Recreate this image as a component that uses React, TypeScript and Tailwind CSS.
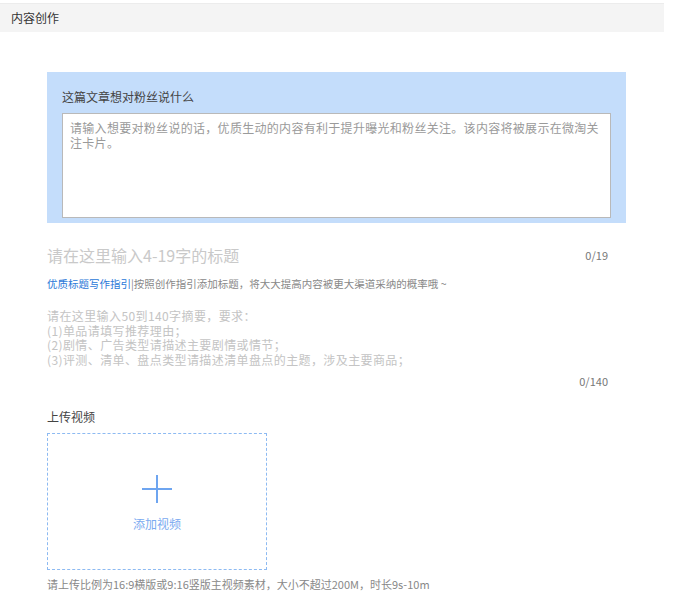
import React from "react";

const font = { fontFamily: '"Noto Sans CJK SC", "Noto Sans", sans-serif' };

export default function App() {
  const summaryTip =
    "请在这里输入50到140字摘要，要求：\n(1)单品请填写推荐理由；\n(2)剧情、广告类型请描述主要剧情或情节；\n(3)评测、清单、盘点类型请描述清单盘点的主题，涉及主要商品；";

  return (
    <div className="min-h-screen w-[675px] bg-white" style={font}>
      {/* header */}
      <div className="mt-[3px] flex h-[29px] w-[664px] items-center border-t border-[#ececec] bg-[#f4f4f4] px-[11px] text-[12px] text-[#333]">
        内容创作
      </div>

      <div className="ml-[47px] w-[579px] pt-[40px]">
        {/* fans message */}
        <div className="bg-[#c4ddfb] px-[15px] pb-[5px] pt-[16px]">
          <div className="text-[12px] leading-[17px] text-[#444]">这篇文章想对粉丝说什么</div>
          <textarea
            className="mt-[8px] block h-[105px] w-full resize-none border border-[#b9b9b9] bg-white px-[7px] pt-[6px] text-[12px] leading-[15px] tracking-[0.3px] text-[#333] outline-none placeholder:text-[#9a9a9a]"
            placeholder="请输入想要对粉丝说的话，优质生动的内容有利于提升曝光和粉丝关注。该内容将被展示在微淘关注卡片。"
          />
        </div>

        {/* title */}
        <div className="mt-[21px] flex items-center justify-between pr-[18px]">
          <input
            className="w-[480px] bg-transparent text-[16px] leading-[22px] text-[#333] outline-none placeholder:text-[#c9c9c9]"
            placeholder="请在这里输入4-19字的标题"
          />
          <span className="text-[11px] text-[#777]">0/19</span>
        </div>

        <div className="mt-[10px] text-[10.5px] leading-[15px] text-[#888]">
          <span className="text-[#2b78d8]">优质标题写作指引</span>|按照创作指引添加标题，将大大提高内容被更大渠道采纳的概率哦 ~
        </div>

        {/* summary */}
        <textarea
          className="mt-[18px] block h-[59px] w-full resize-none overflow-hidden bg-transparent p-0 text-[12px] leading-[14.7px] tracking-[0.4px] text-[#333] outline-none placeholder:text-[#c4c4c4]"
          placeholder={summaryTip}
        />
        <div className="mt-[6px] pr-[18px] text-right text-[11px] leading-[15px] text-[#777]">0/140</div>

        {/* upload */}
        <div className="mt-[19px] text-[12px] leading-[17px] text-[#444]">上传视频</div>
        <div className="mt-[8px] flex h-[137px] w-[220px] flex-col items-center border border-dashed border-[#8dbaf2] pt-[41px]">
          <svg width="30" height="28" viewBox="0 0 30 28" className="block">
            <path d="M15 0v28M0 14h30" stroke="#6ea5f0" strokeWidth="2" fill="none" />
          </svg>
          <div className="mt-[12px] text-[12px] leading-[17px] text-[#7aaaf0]">添加视频</div>
        </div>
        <div className="mt-[7px] text-[11px] leading-[15px] text-[#888]">
          请上传比例为16:9横版或9:16竖版主视频素材，大小不超过200M，时长9s-10m
        </div>
      </div>
    </div>
  );
}
